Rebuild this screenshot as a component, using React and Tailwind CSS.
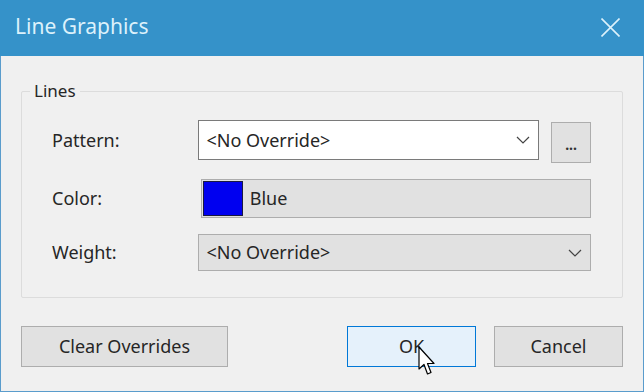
const font = { fontFamily: '"Noto Sans", "Open Sans", sans-serif' }

function Chevron() {
  return (
    <svg width="14" height="8" viewBox="0 0 14 8" className="shrink-0">
      <path d="M1 1 L7 7 L13 1" fill="none" stroke="#444" strokeWidth="1.2" />
    </svg>
  )
}

function Cursor() {
  return (
    <svg width="22" height="34" viewBox="0 0 22 34" className="absolute left-[418px] top-[346px]">
      <path
        d="M1 1 L1 23 L6 18.5 L9.5 28 L13 26.5 L9.5 17.5 L16 17.5 Z"
        fill="#fff"
        stroke="#000"
        strokeWidth="1.2"
        strokeLinejoin="round"
      />
    </svg>
  )
}

export default function App() {
  return (
    <div className="relative w-[644px] h-[392px] overflow-hidden bg-[#f0f0f0] text-[#262626]" style={font}>
      <div className="h-[56px] bg-[#3592c9] flex items-center justify-between pl-[15px] pr-[24px]">
        <span className="text-[21px] text-[#dcf1fb] pb-[2px]">Line Graphics</span>
        <svg width="19" height="19" viewBox="0 0 19 19" className="mb-[1px]">
          <path d="M0.5 0.5 L18.5 18.5 M18.5 0.5 L0.5 18.5" stroke="#dcf1fb" strokeWidth="1.6" />
        </svg>
      </div>
      <div className="h-[336px] border-x border-b border-[#5a9ccc] px-[20px] pt-[35px]">
        <div className="relative h-[207px] border border-[#dcdcdc] rounded-[2px] pl-[30px] pr-[31px] pt-[28px]">
          <span className="absolute -top-[14px] left-[8px] bg-[#f0f0f0] px-[4px] text-[17px]">Lines</span>
          <div className="flex items-center h-[40px]">
            <span className="w-[147px] text-[18px]">Pattern:</span>
            <div className="w-[342px] h-[40px] bg-white border border-[#7a7a7a] flex items-center justify-between pl-[7px] pr-[8px]">
              <span className="text-[18px]">&lt;No Override&gt;</span>
              <Chevron />
            </div>
            <div className="ml-[12px] w-[40px] h-[41px] mt-[4px] pt-[5px] bg-[#e1e1e1] border border-[#adadad] flex items-center justify-center text-[14px] font-bold text-[#333]">
              ...
            </div>
          </div>
          <div className="flex items-center h-[39px] mt-[19px]">
            <span className="w-[149px] text-[18px]">Color:</span>
            <div className="w-[391px] h-[39px] bg-[#e1e1e1] border border-[#adadad] flex items-center pl-[1px]">
              <div className="w-[40px] h-[35px] bg-[#0000f0] border border-[#1a1a40]"></div>
              <span className="ml-[7px] text-[18px]">Blue</span>
            </div>
          </div>
          <div className="flex items-center h-[37px] mt-[16px]">
            <span className="w-[147px] text-[18px]">Weight:</span>
            <div className="w-[394px] h-[37px] bg-[#e1e1e1] border border-[#adadad] flex items-center justify-between pl-[7px] pr-[8px]">
              <span className="text-[18px]">&lt;No Override&gt;</span>
              <Chevron />
            </div>
          </div>
        </div>
        <div className="flex items-center mt-[28px] h-[41px]">
          <button className="w-[207px] h-[41px] bg-[#e1e1e1] border border-[#adadad] text-[18px]">Clear Overrides</button>
          <button className="ml-[119px] w-[129px] h-[41px] bg-[#e5f1fb] border border-[#0078d7] text-[18px]">OK</button>
          <button className="ml-[18px] w-[129px] h-[41px] bg-[#e1e1e1] border border-[#adadad] text-[18px]">Cancel</button>
        </div>
      </div>
      <Cursor />
    </div>
  )
}
